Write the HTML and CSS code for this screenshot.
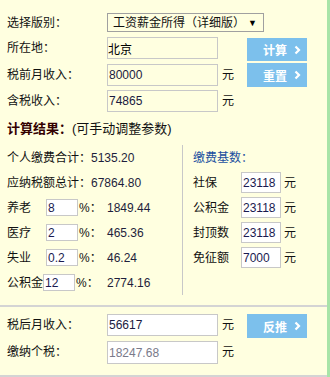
FILE: index.html
```html
<!DOCTYPE html>
<html lang="zh-CN">
<head>
<meta charset="utf-8">
<title>个税计算器</title>
<link rel="stylesheet" href="styles.css">
</head>
<body>
<div class="page">
  <div class="form top">
    <span class="lbl r1">选择版别：</span>
    <div class="select-box r1">
      <span>工资薪金所得（详细版）</span>
      <span class="arrow">▼</span>
    </div>

    <span class="lbl r2">所在地：</span>
    <input class="txt yellow r2" value="北京">
    <span class="unit r2"></span>
    <button class="btn r2 b-first">计算<svg class="chev" width="7" height="10" viewBox="0 0 7 10"><path d="M1.5 1.5 L5 5 L1.5 8.5" fill="none" stroke="#fff" stroke-width="2.2"/></svg></button>

    <span class="lbl r3">税前月收入：</span>
    <input class="txt yellow r3" value="80000">
    <span class="unit r3">元</span>
    <button class="btn r3 b-second">重置<svg class="chev" width="7" height="10" viewBox="0 0 7 10"><path d="M1.5 1.5 L5 5 L1.5 8.5" fill="none" stroke="#fff" stroke-width="2.2"/></svg></button>

    <span class="lbl r4">含税收入：</span>
    <input class="txt yellow r4" value="74865">
    <span class="unit r4">元</span>
  </div>

  <div class="result-title"><b>计算结果：</b>(可手动调整参数)</div>

  <div class="results">
    <div class="col-left">
      <div class="row">个人缴费合计：<span class="num">5135.20</span></div>
      <div class="row">应纳税额总计：<span class="num">67864.80</span></div>
      <div class="row rate">
        <span class="rl"><span class="rname">养老</span><input class="small" value="8"><span class="pct">%：</span></span><span class="num">1849.44</span>
      </div>
      <div class="row rate">
        <span class="rl"><span class="rname">医疗</span><input class="small" value="2"><span class="pct">%：</span></span><span class="num">465.36</span>
      </div>
      <div class="row rate">
        <span class="rl"><span class="rname">失业</span><input class="small" value="0.2"><span class="pct">%：</span></span><span class="num">46.24</span>
      </div>
      <div class="row rate">
        <span class="rl"><span class="rname auto">公积金</span><input class="small" value="12"><span class="pct">%：</span></span><span class="num">2774.16</span>
      </div>
    </div>
    <div class="col-right">
      <div class="row blue">缴费基数：</div>
      <div class="row"><span class="bname">社保</span><input class="base" value="23118"><span class="bunit">元</span></div>
      <div class="row"><span class="bname">公积金</span><input class="base" value="23118"><span class="bunit">元</span></div>
      <div class="row"><span class="bname">封顶数</span><input class="base" value="23118"><span class="bunit">元</span></div>
      <div class="row"><span class="bname">免征额</span><input class="base" value="7000"><span class="bunit">元</span></div>
    </div>
  </div>

  <div class="rule first-rule"></div>

  <div class="form bottom">
    <span class="lbl">税后月收入：</span>
    <input class="txt white" value="56617">
    <span class="unit">元</span>
    <button class="btn">反推<svg class="chev" width="7" height="10" viewBox="0 0 7 10"><path d="M1.5 1.5 L5 5 L1.5 8.5" fill="none" stroke="#fff" stroke-width="2.2"/></svg></button>

    <span class="lbl">缴纳个税：</span>
    <input class="txt white grey" value="18247.68">
    <span class="unit">元</span>
  </div>

  <div class="rule last-rule"></div>
</div>
</body>
</html>
```

FILE: styles.css
```css
html, body {
  margin: 0;
  padding: 0;
}
body {
  background: #ffffe0;
  font-family: "Liberation Sans", "Noto Sans CJK SC", sans-serif;
  font-size: 12px;
  line-height: 16px;
  color: #111;
  width: 330px;
  height: 377px;
  overflow: hidden;
}
.page {
  width: 327px;
  height: 377px;
  border-right: 3px solid #a8e4a8;
  background: #ffffe0;
}
.form {
  display: grid;
  grid-template-columns: 100px 111px 29px 60px;
  padding-left: 7px;
  align-items: start;
}
.top {
  padding-top: 13px;
  grid-template-rows: 24px 27px 26px 22px;
}
.lbl {
  grid-column: 1;
  height: 22px;
  display: flex;
  align-items: center;
  color: #111;
}
.r1.lbl { height: 19px; }
.select-box {
  grid-column: 2 / span 3;
  width: 153px;
  height: 17px;
  border: 1px solid #a0a0a0;
  background: #ffffe0;
  display: flex;
  align-items: center;
  justify-content: space-between;
  padding: 0 6px 0 5px;
  box-sizing: content-box;
  width: 144px;
}
.select-box .arrow {
  font-size: 9px;
  color: #000;
}
.txt {
  grid-column: 2;
  width: 111px;
  height: 22px;
  box-sizing: border-box;
  border: 1px solid #c8c8c8;
  padding: 0 1px;
  margin: 0;
  font: 12px "Liberation Sans", "Noto Sans CJK SC", sans-serif;
  color: #1a1a40;
  outline: none;
}
.yellow { background: #ffffe0; }
.yellow.r2 { padding-left: 0; color: #000; }
.white { background: #fff; }
.grey { color: #7a7a8a; height: 23px; }
.unit {
  grid-column: 3;
  height: 22px;
  display: flex;
  align-items: center;
  padding-left: 4px;
}
.btn {
  grid-column: 4;
  width: 60px;
  height: 24px;
  border: 0;
  margin: 0;
  padding: 0 6px 0 16px;
  background: #7cc0ec;
  color: #fff;
  font: bold 12px "Noto Sans CJK SC", sans-serif;
  display: flex;
  align-items: center;
  justify-content: space-between;
}
.b-first { margin-top: 1px; height: 23px; }
.b-second { margin-top: -1px; }
.result-title {
  margin-top: 6px;
  padding-left: 7px;
  height: 20px;
  line-height: 20px;
  font-size: 13px;
  color: #111;
}
.result-title b {
  color: #330000;
  font-family: "Noto Sans CJK SC", sans-serif;
}
.results {
  margin-top: 7px;
  display: flex;
  height: 150px;
}
.col-left {
  width: 175px;
  padding-left: 7px;
}
.col-right {
  border-left: 1px solid #c8c8c8;
  padding-left: 10px;
  flex: 1;
}
.row {
  height: 25px;
  display: flex;
  align-items: center;
  white-space: nowrap;
}
.num { color: #1e1e3c; }
.rate {
  display: grid;
  grid-template-columns: 100px auto;
  align-items: center;
}
.rl {
  display: flex;
  align-items: center;
}
.rname { width: 39px; }
.rname.auto { width: 36px; }
.small {
  width: 32px;
  height: 17px;
  box-sizing: border-box;
  border: 1px solid #c8c8c8;
  background: #fff;
  padding: 0 1px;
  margin: 0;
  font: 12px "Liberation Sans", sans-serif;
  color: #1a1a50;
  outline: none;
}
.pct { margin-left: 1px; }
.blue { color: #1a4f9f; }
.bname { width: 48px; }
.base {
  width: 40px;
  height: 21px;
  box-sizing: border-box;
  border: 1px solid #c8c8c8;
  background: #fff;
  padding: 0 1px;
  margin: 0;
  font: 12px "Liberation Sans", sans-serif;
  color: #1a1a50;
  outline: none;
}
.bunit { margin-left: 3px; }
.rule {
  height: 2px;
  background: #d4d4d4;
}
.first-rule { margin-top: 10px; }
.bottom {
  margin-top: 7px;
  row-gap: 3px;
}
.last-rule { margin-top: 11px; }
```
